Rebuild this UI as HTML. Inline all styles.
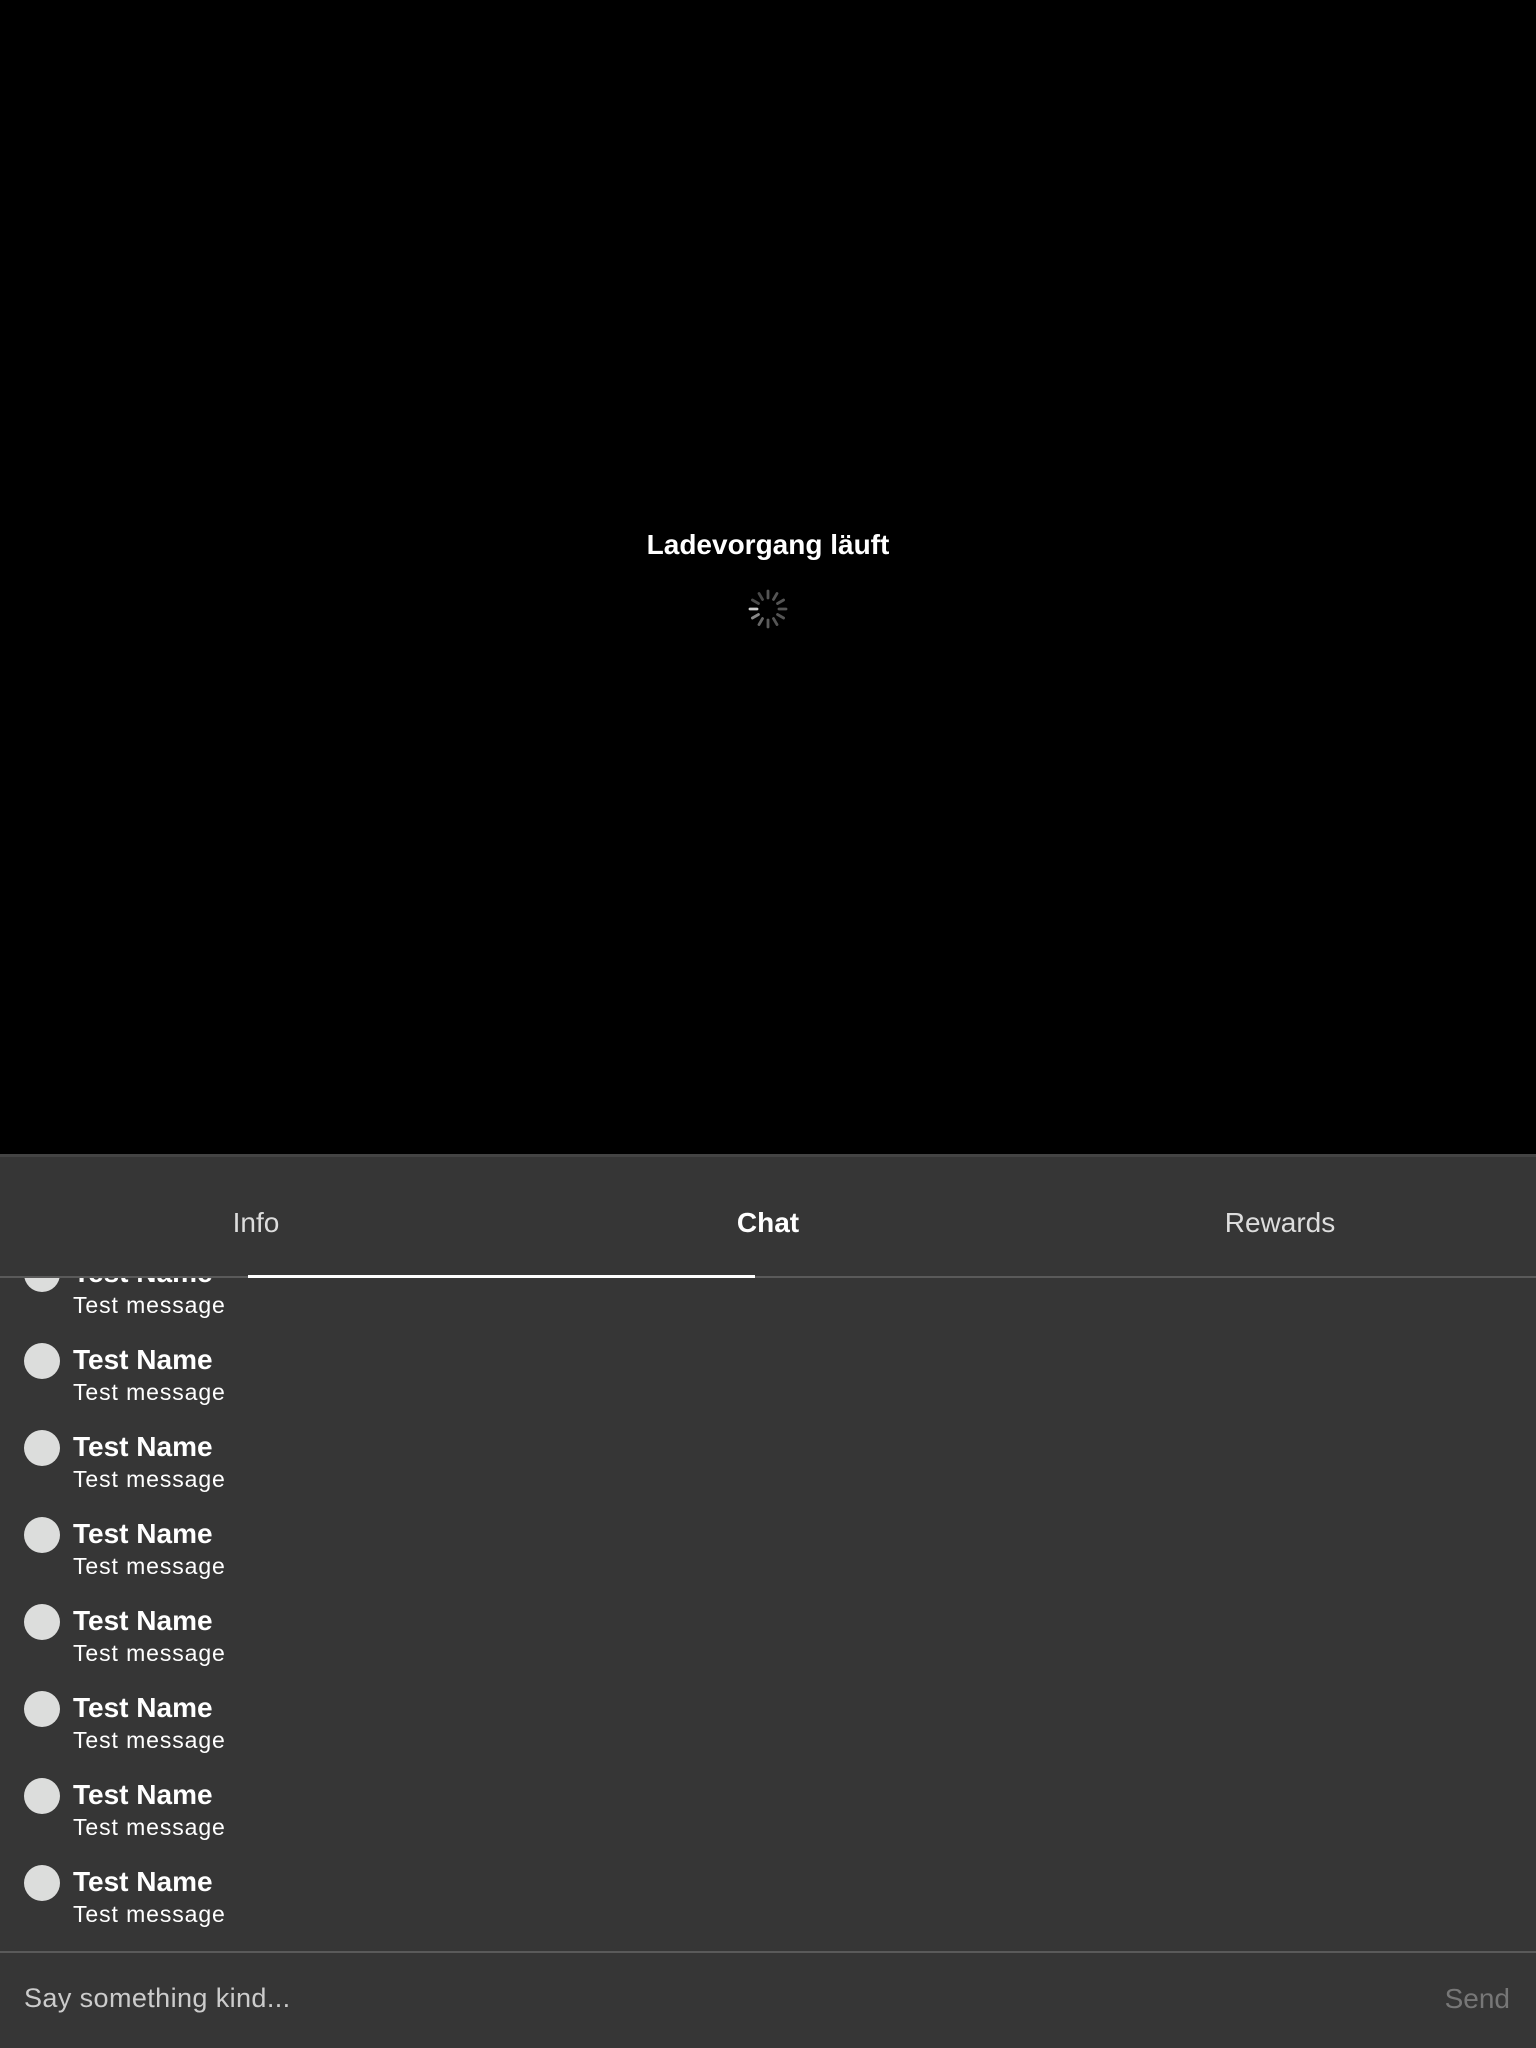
<!DOCTYPE html>
<html><head><meta charset="utf-8"><style>
html,body{margin:0;padding:0;}
body{width:1536px;height:2048px;background:#363636;position:relative;overflow:hidden;font-family:"Liberation Sans",sans-serif;}
.top{position:absolute;left:0;top:0;width:1536px;height:1154px;background:#000;}
.title{position:absolute;left:0;width:1536px;top:527px;text-align:center;color:#fff;font-weight:bold;font-size:28px;line-height:36px;}
.spin{position:absolute;left:748px;top:589px;}
.edge{position:absolute;left:0;top:1154px;width:1536px;height:3px;background:#444;}
.row{position:absolute;left:0;width:1536px;height:87px;}
.av{position:absolute;left:24px;top:0;width:36px;height:36px;border-radius:50%;background:#dcdddc;}
.nm{position:absolute;left:73px;top:-1px;color:#fff;font-weight:bold;font-size:28px;line-height:36px;}
.ms{position:absolute;left:73px;top:35px;color:#fff;font-size:23px;line-height:28px;letter-spacing:0.9px;}
.tabs{position:absolute;left:0;top:1157px;width:1536px;height:119px;background:#363636;}
.tab{position:absolute;top:0;width:512px;height:119px;line-height:132px;text-align:center;font-size:28px;color:#ddd;}
.div{position:absolute;left:0;top:1276px;width:1536px;height:2px;background:#5a5a5a;}
.ul{position:absolute;left:248px;top:1275px;width:507px;height:3px;background:#fff;}
.bdiv{position:absolute;left:0;top:1951px;width:1536px;height:2px;background:#5a5a5a;}
.inp{position:absolute;left:24px;top:1982px;font-size:27px;line-height:32px;color:#ccc;letter-spacing:0.4px;}
.send{position:absolute;right:26px;top:1983px;font-size:28px;line-height:32px;color:#777;}
</style></head><body>
<div class="top">
<div class="title">Ladevorgang läuft</div>
<svg class="spin" width="40" height="40" viewBox="-20 -20 40 40">
<g stroke-width="2.8" stroke-linecap="round">
<line x1="0" y1="-11" x2="0" y2="-18" stroke="#555" transform="rotate(0)"/>
<line x1="0" y1="-11" x2="0" y2="-18" stroke="#555" transform="rotate(30)"/>
<line x1="0" y1="-11" x2="0" y2="-18" stroke="#555" transform="rotate(60)"/>
<line x1="0" y1="-11" x2="0" y2="-18" stroke="#555" transform="rotate(90)"/>
<line x1="0" y1="-11" x2="0" y2="-18" stroke="#555" transform="rotate(120)"/>
<line x1="0" y1="-11" x2="0" y2="-18" stroke="#555" transform="rotate(150)"/>
<line x1="0" y1="-11" x2="0" y2="-18" stroke="#5a5a5a" transform="rotate(180)"/>
<line x1="0" y1="-11" x2="0" y2="-18" stroke="#666" transform="rotate(210)"/>
<line x1="0" y1="-11" x2="0" y2="-18" stroke="#888" transform="rotate(240)"/>
<line x1="0" y1="-11" x2="0" y2="-18" stroke="#ccc" transform="rotate(270)"/>
<line x1="0" y1="-11" x2="0" y2="-18" stroke="#4a4a4a" transform="rotate(300)"/>
<line x1="0" y1="-11" x2="0" y2="-18" stroke="#4a4a4a" transform="rotate(330)"/>
</g></svg>
</div>
<div class="edge"></div>

<div class="row" style="top:1256px"><div class="av"></div><div class="nm">Test Name</div><div class="ms">Test message</div></div>
<div class="row" style="top:1343px"><div class="av"></div><div class="nm">Test Name</div><div class="ms">Test message</div></div>
<div class="row" style="top:1430px"><div class="av"></div><div class="nm">Test Name</div><div class="ms">Test message</div></div>
<div class="row" style="top:1517px"><div class="av"></div><div class="nm">Test Name</div><div class="ms">Test message</div></div>
<div class="row" style="top:1604px"><div class="av"></div><div class="nm">Test Name</div><div class="ms">Test message</div></div>
<div class="row" style="top:1691px"><div class="av"></div><div class="nm">Test Name</div><div class="ms">Test message</div></div>
<div class="row" style="top:1778px"><div class="av"></div><div class="nm">Test Name</div><div class="ms">Test message</div></div>
<div class="row" style="top:1865px"><div class="av"></div><div class="nm">Test Name</div><div class="ms">Test message</div></div>

<div class="tabs">
<div class="tab" style="left:0">Info</div>
<div class="tab" style="left:512px;color:#fff;font-weight:bold">Chat</div>
<div class="tab" style="left:1024px">Rewards</div>
</div>
<div class="div"></div>
<div class="ul"></div>
<div class="bdiv"></div>
<div class="inp">Say something kind...</div>
<div class="send">Send</div>
</body></html>
